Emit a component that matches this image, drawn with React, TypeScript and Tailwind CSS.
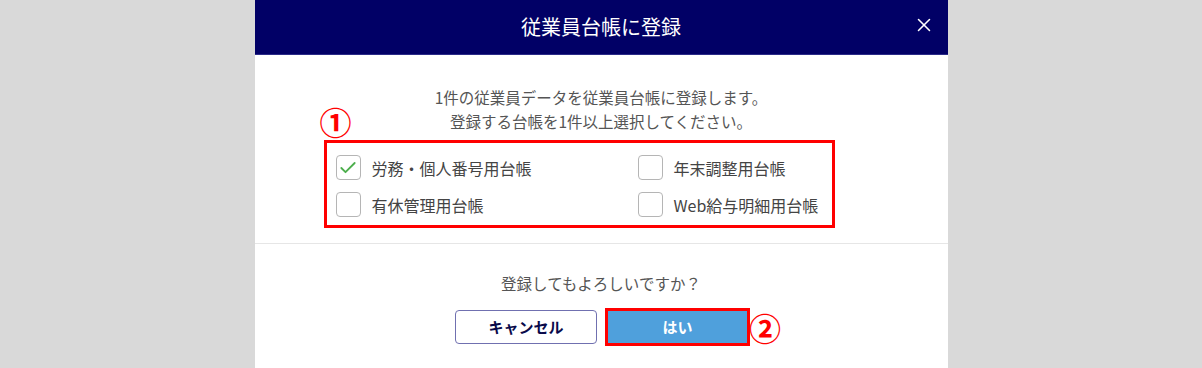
import { X, Check } from "lucide-react";

const LEDGERS = [
  { label: "労務・個人番号用台帳", checked: true },
  { label: "年末調整用台帳", checked: false },
  { label: "有休管理用台帳", checked: false },
  { label: "Web給与明細用台帳", checked: false },
];

function CheckBox({ checked }: { checked: boolean }) {
  return (
    <span className="flex h-[25px] w-[25px] items-center justify-center rounded-[4px] border border-[#b5b5b5] bg-white">
      {checked && <Check className="h-[20px] w-[20px] text-[#4cae4c]" strokeWidth={2.2} />}
    </span>
  );
}

export default function App() {
  return (
    <div
      className="flex h-[368px] w-full justify-center overflow-hidden bg-[#d9d9d9]"
      style={{ fontFamily: '"Noto Sans CJK JP", "Noto Sans", sans-serif' }}
    >
      <div className="flex w-[693px] flex-col bg-white">
        {/* header */}
        <div className="relative flex h-[55px] shrink-0 items-center justify-center border-b border-[#2b2b88] bg-[#010066]">
          <h1 className="text-[20px] text-white">従業員台帳に登録</h1>
          <button className="absolute right-[13px] top-[14px] text-white">
            <X className="h-[22px] w-[22px]" strokeWidth={1.7} />
          </button>
        </div>

        {/* body */}
        <div className="flex flex-col items-center border-b border-[#e6e6e6] pb-[15px] pt-[30px]">
          <p className="text-center text-[15.5px] leading-[24px] text-[#555]">
            1件の従業員データを従業員台帳に登録します。
            <br />
            登録する台帳を1件以上選択してください。
          </p>

          <div className="relative ml-[69px] mt-[7px] self-start">
            <span className="absolute bottom-full left-[-4px] mb-[3px] text-[32px] font-bold leading-none text-[#ff0000]">
              ①
            </span>
            <div className="grid w-[511px] grid-cols-[302px_1fr] gap-y-[12px] border-[3px] border-[#ff0000] pb-[8px] pl-[9px] pt-[12px]">
              {LEDGERS.map((l) => (
                <label key={l.label} className="flex items-center gap-[11px]">
                  <CheckBox checked={l.checked} />
                  <span className="text-[16px] text-[#444]">{l.label}</span>
                </label>
              ))}
            </div>
          </div>
        </div>

        {/* footer */}
        <div className="flex flex-col items-center pt-[27px]">
          <p className="text-[15.5px] leading-[24px] text-[#555]">登録してもよろしいですか？</p>
          <div className="mt-[13px] flex items-center gap-[8px] pl-[3px]">
            <button className="h-[34px] w-[142px] rounded-[4px] border border-[#7070b0] bg-white text-[15px] font-bold text-[#0a0a4a]">
              キャンセル
            </button>
            <div className="relative border-[3px] border-[#ff0000]">
              <button className="block h-[32px] w-[139px] bg-[#4fa0dc] text-[15px] font-bold text-white">
                はい
              </button>
              <span className="absolute left-full top-[0px] ml-[2px] text-[32px] font-bold leading-none text-[#ff0000]">
                ②
              </span>
            </div>
          </div>
        </div>
      </div>
    </div>
  );
}
